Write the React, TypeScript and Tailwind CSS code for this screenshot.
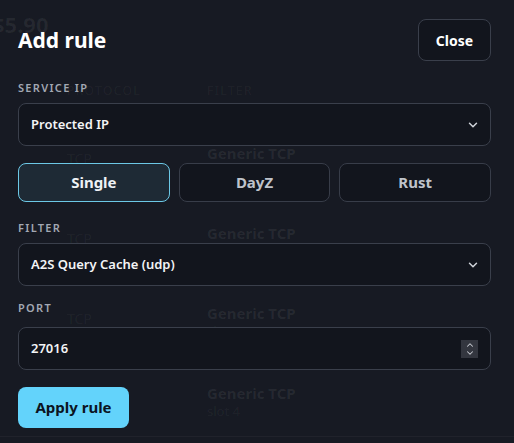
import { ChevronDown, ChevronUp } from "lucide-react";

const font = { fontFamily: '"Noto Sans", "Open Sans", sans-serif' };

function GhostTable() {
  const rows = [142, 222, 302, 382];
  return (
    <div className="absolute inset-0 pointer-events-none select-none text-[#ffffff0d]">
      <div className="absolute left-[-8px] top-[8px] text-[22px] font-bold text-[#ffffff10]">$5.90</div>
      <div className="absolute left-[67px] top-[82px] text-[12px] tracking-[0.12em]">PROTOCOL</div>
      <div className="absolute left-[207px] top-[82px] text-[12px] tracking-[0.12em]">FILTER</div>
      {rows.map((y) => (
        <div key={y} className="absolute left-0 right-0" style={{ top: y }}>
          <div className="absolute left-[67px] top-[6px] text-[14px]">TCP</div>
          <div className="absolute left-[207px] top-0 text-[15px] font-bold text-[#ffffff12]">Generic TCP</div>
          <div className="absolute left-[207px] top-[20px] text-[13px]">slot 4</div>
        </div>
      ))}
      <div className="absolute left-0 right-0 top-[436px] h-px bg-[#ffffff0a]" />
    </div>
  );
}

function Label({ children }: { children: string }) {
  return (
    <div className="text-[11px] font-semibold tracking-[0.12em] text-[#a3a8b3] leading-none">{children}</div>
  );
}

function SelectBox({ value }: { value: string }) {
  return (
    <div className="flex h-[43px] items-center justify-between rounded-lg border border-[#3a3f4b] bg-[#12151d] pl-3 pr-2.5">
      <span className="text-[13px] font-semibold text-[#f3f4f6]">{value}</span>
      <ChevronDown className="h-3.5 w-3.5 text-[#d1d5db]" strokeWidth={2.5} />
    </div>
  );
}

export default function App() {
  const modes = ["Single", "DayZ", "Rust"];
  return (
    <div className="relative h-[443px] w-[514px] overflow-hidden bg-[#171a23]" style={font}>
      <GhostTable />
      <div className="relative z-10 flex flex-col pl-[18px] pr-[23px] pt-[19px]">
        <div className="flex items-center justify-between">
          <h2 className="text-[21px] font-bold text-white leading-none">Add rule</h2>
          <button
            type="button"
            className="h-[42px] w-[73px] rounded-lg border border-[#3a3f4b] bg-[#12151d] text-[14px] font-bold text-white"
          >
            Close
          </button>
        </div>

        <div className="mt-[21px]">
          <Label>SERVICE IP</Label>
        </div>
        <div className="mt-[10px]">
          <SelectBox value="Protected IP" />
        </div>

        <div className="mt-[17px] grid grid-cols-3 gap-[9px]">
          {modes.map((m, i) => (
            <button
              key={m}
              type="button"
              className={
                i === 0
                  ? "h-[39px] rounded-lg border border-[#6cc8e6] bg-[#1e2a35] text-[15px] font-bold text-[#eef2f6]"
                  : "h-[39px] rounded-lg border border-[#383d49] bg-[#12151d] text-[15px] font-bold text-[#bfc3cb]"
              }
            >
              {m}
            </button>
          ))}
        </div>

        <div className="mt-[20px]">
          <Label>FILTER</Label>
        </div>
        <div className="mt-[10px]">
          <SelectBox value="A2S Query Cache (udp)" />
        </div>

        <div className="mt-[16px]">
          <Label>PORT</Label>
        </div>
        <div className="mt-[14px] flex h-[43px] items-center justify-between rounded-lg border border-[#3a3f4b] bg-[#12151d] pl-3 pr-3">
          <span className="text-[13px] font-semibold text-[#f3f4f6]">27016</span>
          <div className="flex h-[18px] w-[17px] flex-col items-center justify-center bg-[#33363f] text-[#c7cad1]">
            <ChevronUp className="h-2.5 w-2.5 -mb-0.5" strokeWidth={2.5} />
            <ChevronDown className="h-2.5 w-2.5" strokeWidth={2.5} />
          </div>
        </div>

        <div className="mt-[17px]">
          <button
            type="button"
            className="h-[41px] w-[111px] rounded-lg bg-[#63d3fb] text-[15px] font-bold text-[#0b1422]"
          >
            Apply rule
          </button>
        </div>
      </div>
    </div>
  );
}
